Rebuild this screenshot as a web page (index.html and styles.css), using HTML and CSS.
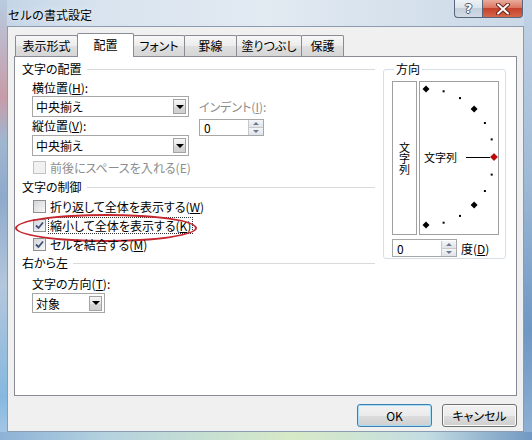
FILE: index.html
```html
<!DOCTYPE html>
<html lang="ja">
<head>
  <meta charset="UTF-8">
  <title>セルの書式設定</title>
  <link rel="stylesheet" href="styles.css">
</head>
<body>
  <div class="window">

    <div class="titlebar">
      <span class="title">セルの書式設定</span>
      <div class="caption-buttons">
        <div class="cap-btn help">?</div>
        <div class="cap-btn close">
          <svg width="16" height="12" viewBox="0 0 16 12">
            <path d="M3 1.5 L13 10.5 M13 1.5 L3 10.5" stroke="#6b2418" stroke-width="4" stroke-linecap="round"/>
            <path d="M3 1.5 L13 10.5 M13 1.5 L3 10.5" stroke="#ffffff" stroke-width="2" stroke-linecap="round"/>
          </svg>
        </div>
      </div>
    </div>

    <div class="client">
      <div class="tabs">
        <div class="tab">表示形式</div>
        <div class="tab active">配置</div>
        <div class="tab">フォント</div>
        <div class="tab">罫線</div>
        <div class="tab">塗りつぶし</div>
        <div class="tab">保護</div>
      </div>

      <div class="panel">
        <div class="left-col">
          <div class="section">文字の配置</div>

          <div class="align-block">
            <div class="align-fields">
              <div class="field-label">横位置(<u>H</u>):</div>
              <div class="combo wide"><span>中央揃え</span><div class="drop"></div></div>
              <div class="field-label gap">縦位置(<u>V</u>):</div>
              <div class="combo wide gap"><span>中央揃え</span><div class="drop"></div></div>
            </div>
            <div class="indent">
              <div class="field-label dim">インデント(<u>I</u>):</div>
              <div class="spin indent-spin">
                <span>0</span>
                <div class="spin-btns"><div class="up"></div><div class="down"></div></div>
              </div>
            </div>
          </div>

          <div class="check disabled first">
            <div class="box"></div>
            <span class="check-label">前後にスペースを入れる(E)</span>
          </div>

          <div class="section control">文字の制御</div>

          <div class="check">
            <div class="box"></div>
            <span class="check-label">折り返して全体を表示する(<u>W</u>)</span>
          </div>
          <div class="check marked">
            <div class="box checked">
              <svg width="11" height="11" viewBox="0 0 11 11"><path d="M2 5.5 L4.5 8 L9 2.5" fill="none" stroke="#3e4f7c" stroke-width="1.8"/></svg>
            </div>
            <span class="check-label focus">縮小して全体を表示する(<u>K</u>)</span>
            <div class="highlight"></div>
          </div>
          <div class="check">
            <div class="box checked">
              <svg width="11" height="11" viewBox="0 0 11 11"><path d="M2 5.5 L4.5 8 L9 2.5" fill="none" stroke="#3e4f7c" stroke-width="1.8"/></svg>
            </div>
            <span class="check-label">セルを結合する(<u>M</u>)</span>
          </div>

          <div class="section rtl">右から左</div>
          <div class="field-label direction">文字の方向(<u>T</u>):</div>
          <div class="combo narrow"><span>対象</span><div class="drop"></div></div>
        </div>

        <fieldset class="orient">
          <legend>方向</legend>
          <div class="orient-boxes">
            <div class="vertical-box">
              <span class="vertical-text">文字列</span>
            </div>
            <div class="dial">
              <svg width="78" height="152" viewBox="0 0 78 152">
                <g fill="#000">
                  <rect x="22.6" y="8.3" width="2" height="2"/>
                  <rect x="39" y="15.1" width="2" height="2"/>
                  <rect x="63.9" y="40" width="2" height="2"/>
                  <rect x="70.7" y="56.4" width="2" height="2"/>
                  <rect x="70.7" y="91.6" width="2" height="2"/>
                  <rect x="63.9" y="108" width="2" height="2"/>
                  <rect x="39" y="132.9" width="2" height="2"/>
                  <rect x="22.6" y="139.7" width="2" height="2"/>
                  <polygon points="6,3.5 9.5,7 6,10.5 2.5,7"/>
                  <polygon points="54.1,23.4 57.6,26.9 54.1,30.4 50.6,26.9"/>
                  <polygon points="54.1,119.6 57.6,123.1 54.1,126.6 50.6,123.1"/>
                  <polygon points="6,139.5 9.5,143 6,146.5 2.5,143"/>
                </g>
                <polygon points="74,71.5 77.5,75 74,78.5 70.5,75" fill="#c80000" stroke="#600000" stroke-width="0.6"/>
                <line x1="46" y1="75.5" x2="70" y2="75.5" stroke="#000" stroke-width="1"/>
                <text x="4" y="79.5" class="dial-text">文字列</text>
              </svg>
            </div>
          </div>
          <div class="degree-row">
            <div class="spin degree-spin">
              <span>0</span>
              <div class="spin-btns"><div class="up"></div><div class="down"></div></div>
            </div>
            <span class="degree-label">度(<u>D</u>)</span>
          </div>
        </fieldset>
      </div>

      <div class="buttons">
        <button class="btn default">OK</button>
        <button class="btn">キャンセル</button>
      </div>
    </div>

  </div>
</body>
</html>
```

FILE: styles.css
```css
* {
  box-sizing: border-box;
}

html, body {
  margin: 0;
}

body {
  width: 532px;
  height: 440px;
  overflow: hidden;
  font-family: "Noto Sans CJK JP", "DejaVu Sans", sans-serif;
  font-size: 12px;
  color: #000;
  font-feature-settings: "palt";
}

u {
  text-decoration: underline;
  text-underline-offset: 1px;
}

/* window frame (vista glass) */

.window {
  width: 532px;
  height: 440px;
  display: flex;
  flex-direction: column;
  padding: 0 8px 8px 7px;
  background:
    linear-gradient(to right, #8db2d6, #b4d2df 20%, #d6eac6 55%, #c4dde2 80%, #7198c2) left bottom / 100% 8px no-repeat,
    linear-gradient(to bottom, #b8cbe0, #c79ca8 22%, #9fb6cf 32%, #8eaacb 45%, #b3c7dc 65%, #86b8df 90%, #a8c9e6) left top / 7px 100% no-repeat,
    linear-gradient(to bottom, #c2d3e5, #9fbad6 40%, #6e97c3 75%, #8fb1d4) right top / 8px 100% no-repeat,
    linear-gradient(to right, #c3d4e6 0, #d9e4ef 20%, #e2eaf2 50%, #d6e1ec 75%, #c9d8e7 100%);
}

.titlebar {
  height: 26px;
  display: flex;
  justify-content: space-between;
  align-items: flex-start;
  padding: 0 1px;
}

.title {
  margin-top: 6px;
  line-height: 18px;
  font-feature-settings: normal;
  text-shadow: 0 0 6px rgba(255, 255, 255, 0.9);
}

.caption-buttons {
  display: flex;
}

.cap-btn {
  height: 18px;
  border: 1px solid #56677b;
  border-top: none;
  display: flex;
  align-items: center;
  justify-content: center;
}

.help {
  width: 28px;
  border-right: none;
  border-radius: 0 0 0 4px;
  background: linear-gradient(#eef2f6, #dde4ec 45%, #c5d0dc 50%, #d2dbe5);
  color: #fff;
  font-family: "DejaVu Sans", sans-serif;
  font-weight: bold;
  font-size: 13px;
  text-shadow: 1px 0 0 #4b5a6b, -1px 0 0 #4b5a6b, 0 1px 0 #4b5a6b, 0 -1px 0 #4b5a6b;
}

.close {
  width: 41px;
  border-radius: 0 0 4px 0;
  background: linear-gradient(#e9ab9c, #dc7762 45%, #c6422b 50%, #d4674c);
}

/* client area */

.client {
  flex: 1;
  background: #f0f0f0;
  border: 1px solid #8b9bb0;
  display: flex;
  flex-direction: column;
  padding: 6px 6px 0;
}

.tabs {
  height: 23px;
  display: flex;
  align-items: flex-end;
  padding-left: 1px;
}

.tab {
  height: 21px;
  border: 1px solid #898c95;
  border-bottom: none;
  border-radius: 2px 2px 0 0;
  margin-left: -1px;
  display: flex;
  align-items: center;
  justify-content: center;
  background: linear-gradient(#f7f7f7, #ececec 50%, #dfdfdf 51%, #d6d6d6);
  line-height: 1;
}

.tab:first-child { margin-left: 0; width: 63px; }
.tab:nth-child(2) { width: 57px; }
.tab:nth-child(3) { width: 52px; }
.tab:nth-child(4) { width: 53px; }
.tab:nth-child(5) { width: 66px; }
.tab:nth-child(6) { width: 43px; }

.tab.active {
  height: 24px;
  margin-bottom: -1px;
  background: #fff;
  position: relative;
  z-index: 1;
  padding-bottom: 2px;
}

.panel {
  height: 340px;
  background: #fff;
  border: 1px solid #898c95;
  display: flex;
  align-items: flex-start;
  padding: 4px 9px 0 6px;
}

.left-col {
  width: 354px;
  padding-left: 1px;
}

.section {
  height: 16px;
  line-height: 16px;
  display: flex;
  align-items: center;
}

.section::after {
  content: "";
  flex: 1;
  border-top: 1px solid #dadada;
  margin-left: 5px;
}

.section.control { margin-top: 4px; }
.section.rtl { margin-top: 3px; }

.field-label {
  line-height: 16px;
  height: 16px;
  white-space: nowrap;
}

.field-label.dim {
  color: #8d8d8d;
}

.align-block {
  display: flex;
  gap: 10px;
  margin-top: 3px;
  padding-left: 10px;
}

.gap { margin-top: 1px; }

.indent {
  padding-top: 19px;
}

.combo {
  height: 21px;
  border: 1px solid #a7a7a7;
  background: #fff;
  display: flex;
  align-items: center;
  justify-content: space-between;
  padding-left: 3px;
}

.combo.wide { width: 157px; }

.combo.narrow {
  width: 73px;
  height: 20px;
  margin: 1px 0 0 10px;
}

.drop {
  width: 13px;
  height: 15px;
  margin-right: 2px;
  border: 1px solid #a3a3a3;
  background: linear-gradient(#f6f6f6, #e6e6e6 50%, #d6d6d6 51%, #d0d0d0);
  display: flex;
  align-items: center;
  justify-content: center;
}

.drop::after {
  content: "";
  border-left: 4px solid transparent;
  border-right: 4px solid transparent;
  border-top: 4px solid #000;
}

.spin {
  height: 17px;
  border: 1px solid #a7a7a7;
  background: #fff;
  display: flex;
  align-items: center;
  justify-content: space-between;
  padding-left: 4px;
}

.indent-spin {
  width: 65px;
  margin-top: 4px;
}

.spin-btns {
  width: 15px;
  height: 15px;
  display: flex;
  flex-direction: column;
  border-left: 1px solid #c9c9c9;
}

.spin-btns div {
  flex: 1;
  display: flex;
  align-items: center;
  justify-content: center;
  background: linear-gradient(#f3f5f8, #dfe4ea);
}

.spin-btns .up::after {
  content: "";
  border-left: 3px solid transparent;
  border-right: 3px solid transparent;
  border-bottom: 3px solid #6c7a8c;
}

.spin-btns .down {
  border-top: 1px solid #c9c9c9;
}

.spin-btns .down::after {
  content: "";
  border-left: 3px solid transparent;
  border-right: 3px solid transparent;
  border-top: 3px solid #6c7a8c;
}

/* checkboxes */

.check {
  height: 16px;
  display: flex;
  align-items: center;
  padding-left: 11px;
  margin-top: 3px;
  position: relative;
}

.box {
  width: 13px;
  height: 13px;
  border: 1px solid #8e8f8f;
  background: linear-gradient(135deg, #d3d5d8, #f8f8f8);
  display: flex;
  align-items: center;
  justify-content: center;
}

.check-label {
  margin-left: 2px;
  padding: 0 1px;
  border: 1px solid transparent;
  line-height: 15px;
  white-space: nowrap;
}

.check-label.focus {
  border: 1px dotted #333;
}

.check.disabled .box {
  border-color: #c3c3c3;
  background: #f1f1f1;
}

.check.disabled .check-label {
  color: #8d8d8d;
}

.highlight {
  position: absolute;
  left: -7px;
  top: -3px;
  width: 182px;
  height: 28px;
  border: 2px solid #c4262e;
  border-radius: 50%;
  pointer-events: none;
}

.direction {
  margin-top: 5px;
  padding-left: 10px;
}

/* orientation group */

.orient {
  margin: 0 0 0 8px;
  width: 123px;
  padding: 4px 6px 1px 8px;
  border: 1px solid #d5dfe5;
  border-radius: 3px;
}

.orient legend {
  padding: 0 2px;
  margin-left: 2px;
  line-height: 16px;
}

.orient-boxes {
  display: flex;
  gap: 2px;
}

.vertical-box {
  width: 25px;
  height: 154px;
  border: 1px solid #a0a0a0;
  display: flex;
  align-items: center;
  justify-content: center;
}

.vertical-text {
  writing-mode: vertical-rl;
  text-orientation: upright;
  font-size: 11px;
  line-height: 14px;
}

.dial {
  width: 80px;
  height: 154px;
  border: 1px solid #a0a0a0;
}

.dial svg {
  display: block;
}

.dial-text {
  font-family: "Noto Sans CJK JP", sans-serif;
  font-size: 11px;
}

.degree-row {
  display: flex;
  align-items: center;
  margin-top: 4px;
}

.degree-spin {
  width: 65px;
  height: 18px;
}

.degree-label {
  margin-left: 4px;
}

/* dialog buttons */

.buttons {
  display: flex;
  justify-content: flex-end;
  gap: 10px;
  margin-top: 8px;
}

.btn {
  width: 75px;
  height: 23px;
  border: 1px solid #707070;
  border-radius: 3px;
  background: linear-gradient(#f2f2f2, #ebebeb 50%, #dddddd 51%, #cfcfcf);
  box-shadow: inset 0 0 0 1px #fbfbfb;
  font-family: inherit;
  font-size: 12px;
  font-feature-settings: "palt";
  color: #000;
  padding: 0;
}

.btn.default {
  border-color: #3c7fb1;
  box-shadow: inset 0 0 0 1px #a9dcf5;
}
```
